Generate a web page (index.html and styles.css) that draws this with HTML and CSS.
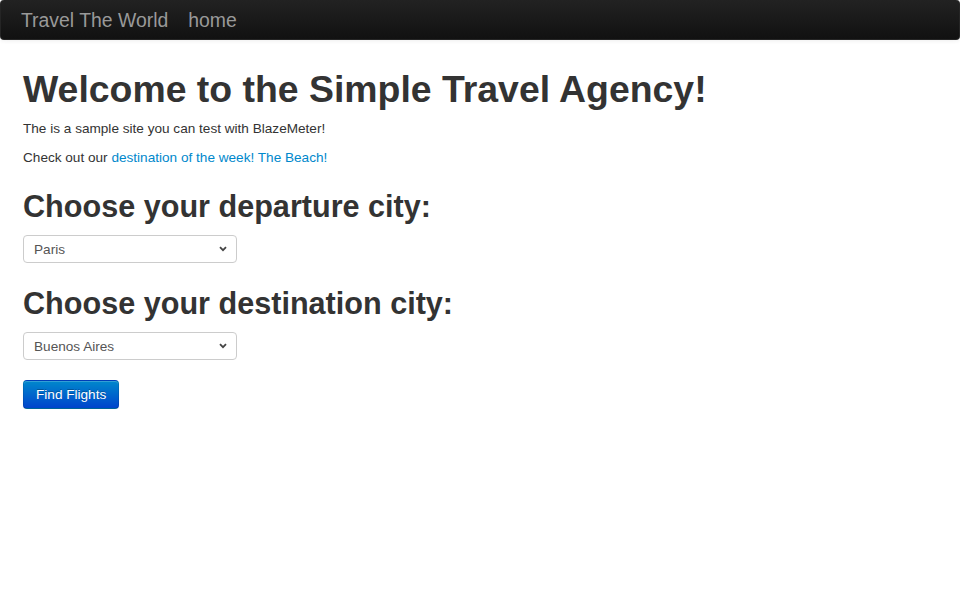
FILE: index.html
```html
<!DOCTYPE html>
<html>
<head>
<meta charset="utf-8">
<title>BlazeDemo</title>
<link rel="stylesheet" href="styles.css">
</head>
<body>
<div class="navbar">
  <a class="brand" href="#">Travel The World</a>
  <a class="nav-link" href="#">home</a>
</div>
<div class="main">
  <h1>Welcome to the Simple Travel Agency!</h1>
  <p>The is a sample site you can test with BlazeMeter!</p>
  <p>Check out our <a class="link" href="#">destination of the week! The Beach!</a></p>
  <form class="form">
    <h2>Choose your departure city:</h2>
    <div class="select-wrap">
      <select class="select" name="fromPort">
        <option>Paris</option>
        <option>Philadelphia</option>
        <option>Boston</option>
        <option>Portland</option>
        <option>San Diego</option>
        <option>Mexico City</option>
        <option>São Paolo</option>
      </select>
      <svg class="chev" width="8" height="6" viewBox="0 0 8 6"><path d="M1 1.2 L4 4.2 L7 1.2" fill="none" stroke="#444" stroke-width="1.8"/></svg>
    </div>
    <h2 class="h2b">Choose your destination city:</h2>
    <div class="select-wrap">
      <select class="select" name="toPort">
        <option>Buenos Aires</option>
        <option>Rome</option>
        <option>London</option>
        <option>Berlin</option>
        <option>New York</option>
        <option>Dublin</option>
        <option>Cairo</option>
      </select>
      <svg class="chev" width="8" height="6" viewBox="0 0 8 6"><path d="M1 1.2 L4 4.2 L7 1.2" fill="none" stroke="#444" stroke-width="1.8"/></svg>
    </div>
    <div class="actions">
      <button type="button" class="btn">Find Flights</button>
    </div>
  </form>
</div>
</body>
</html>
```

FILE: styles.css
```css
html, body {
  margin: 0;
  padding: 0;
  background: #fff;
}
body {
  font-family: "Liberation Sans", Arial, sans-serif;
  font-size: 13.6px;
  line-height: 20px;
  color: #333;
}
.navbar {
  height: 40px;
  display: flex;
  align-items: center;
  padding-left: 20px;
  background: linear-gradient(to bottom, #222 0%, #111 100%);
  border: 1px solid #252525;
  border-top: 0;
  box-sizing: border-box;
  border-radius: 4px;
  box-shadow: 0 1px 4px rgba(0,0,0,0.065);
}
.brand {
  font-size: 19.4px;
  line-height: 20px;
  color: #999;
  text-decoration: none;
  margin-right: 20px;
}
.nav-link {
  font-size: 19.4px;
  line-height: 20px;
  color: #999;
  text-decoration: none;
}
.main {
  padding: 0 23px;
}
h1 {
  font-size: 37.4px;
  line-height: 40px;
  font-weight: bold;
  margin: 29px 0 10px;
  color: #333;
}
p {
  margin: 0 0 9px;
}
.link {
  color: #0088cc;
  text-decoration: none;
}
.form {
  margin: 0;
}
h2 {
  font-size: 30.6px;
  line-height: 40px;
  font-weight: bold;
  margin: 18px 0 9px;
  color: #333;
}
.h2b {
  margin-top: 20px;
}
.select-wrap {
  position: relative;
  width: 214px;
  height: 28px;
}
.select {
  -webkit-appearance: none;
  appearance: none;
  width: 214px;
  height: 28px;
  box-sizing: border-box;
  border: 1px solid #ccc;
  border-radius: 4px;
  background: #fff;
  color: #555;
  font-family: "Liberation Sans", Arial, sans-serif;
  font-size: 13.6px;
  padding: 0 10px;
  margin: 0;
}
.chev {
  position: absolute;
  right: 10px;
  top: 11px;
  pointer-events: none;
}
.actions {
  margin-top: 20px;
}
.btn {
  height: 29px;
  box-sizing: border-box;
  padding: 0 12px;
  font-family: "Liberation Sans", Arial, sans-serif;
  font-size: 13.6px;
  color: #fff;
  background: linear-gradient(to bottom, #0088cc 0%, #0044cc 100%);
  border: 1px solid #0044cc;
  border-color: rgba(0,0,0,0.1) rgba(0,0,0,0.1) rgba(0,0,0,0.25);
  border-radius: 4px;
  text-shadow: 0 -1px 0 rgba(0,0,0,0.25);
  box-shadow: inset 0 1px 0 rgba(255,255,255,0.2), 0 1px 2px rgba(0,0,0,0.05);
  cursor: pointer;
}
```
